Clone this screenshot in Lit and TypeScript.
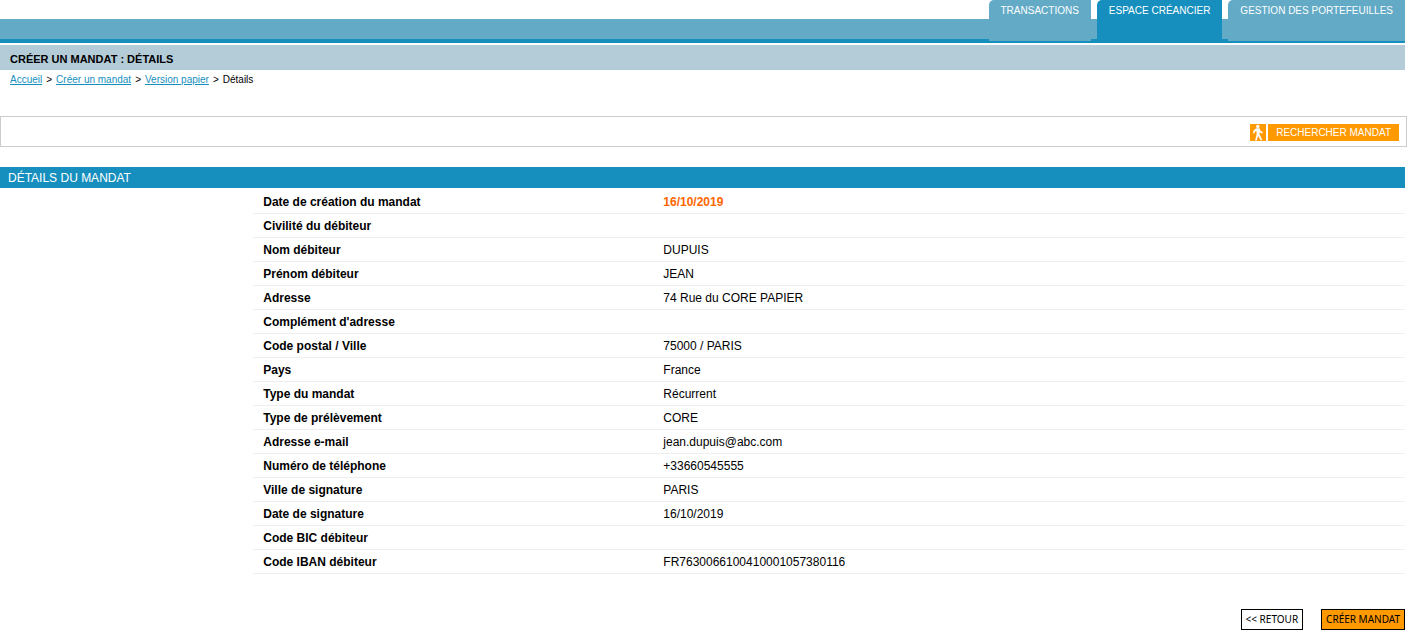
import { LitElement, html, css, nothing } from "lit";
import { customElement } from "lit/decorators.js";
import { classMap } from "lit/directives/class-map.js";

interface Row {
  label: string;
  value: string;
  highlight?: boolean;
}

const TABS = ["TRANSACTIONS", "ESPACE CRÉANCIER", "GESTION DES PORTEFEUILLES"];
const ACTIVE_TAB = 1;

const CRUMBS = ["Accueil", "Créer un mandat", "Version papier"];

const ROWS: Row[] = [
  { label: "Date de création du mandat", value: "16/10/2019", highlight: true },
  { label: "Civilité du débiteur", value: "" },
  { label: "Nom débiteur", value: "DUPUIS" },
  { label: "Prénom débiteur", value: "JEAN" },
  { label: "Adresse", value: "74 Rue du CORE PAPIER" },
  { label: "Complément d'adresse", value: "" },
  { label: "Code postal / Ville", value: "75000 / PARIS" },
  { label: "Pays", value: "France" },
  { label: "Type du mandat", value: "Récurrent" },
  { label: "Type de prélèvement", value: "CORE" },
  { label: "Adresse e-mail", value: "jean.dupuis@abc.com" },
  { label: "Numéro de téléphone", value: "+33660545555" },
  { label: "Ville de signature", value: "PARIS" },
  { label: "Date de signature", value: "16/10/2019" },
  { label: "Code BIC débiteur", value: "" },
  { label: "Code IBAN débiteur", value: "FR7630066100410001057380116" },
];

@customElement("app-root")
export class AppRoot extends LitElement {
  static styles = css`
    :host {
      display: block;
      box-sizing: border-box;
      background: #fff;
      color: #000;
      font: 12px/14px "Liberation Sans", Arial, sans-serif;
    }
    .tabs {
      display: flex;
      justify-content: flex-end;
      gap: 6px;
      height: 43px;
      margin-right: 2px;
      background:
        linear-gradient(#168fbe, #168fbe) 0 100% / 100% 4px no-repeat,
        linear-gradient(#62aac6, #62aac6) 0 19px / 100% 20px no-repeat;
    }
    .tab {
      box-sizing: border-box;
      height: 41px;
      padding: 4px 12px 0;
      border-radius: 5px 0 0 0;
      background: #62aac6;
      color: #fff;
      font-size: 10px;
      text-decoration: none;
      white-space: nowrap;
    }
    .tab.active {
      background: #168fbe;
    }
    .title {
      margin: 2px 2px 0 0;
      padding: 7px 10px 4px;
      background: #b3ccd8;
      font-size: 11px;
      font-weight: bold;
    }
    .crumbs {
      display: flex;
      gap: 4px;
      padding: 3px 10px;
      font-size: 10px;
    }
    .crumbs a {
      color: #168fbe;
    }
    .toolbar {
      display: flex;
      justify-content: flex-end;
      margin-top: 26px;
      padding: 7px 7px 5px;
      border: 1px solid #ccc;
    }
    .search {
      display: flex;
      gap: 2px;
      padding: 0;
      border: 0;
      background: none;
      color: #fff;
      font: 10px/17px "Liberation Sans", Arial, sans-serif;
      cursor: pointer;
    }
    .search-icon {
      display: block;
      width: 16px;
      height: 17px;
      background: #f90;
    }
    .search-label {
      padding: 0 8px;
      background: #f90;
    }
    .section {
      margin: 20px 2px 0 0;
      padding: 4px 8px 3px;
      background: #168fbe;
      color: #fff;
      font-size: 12px;
      font-weight: normal;
    }
    .details {
      width: calc(82% - 2px);
      margin: 2px 2px 0 18%;
      border-collapse: collapse;
      table-layout: fixed;
    }
    .details th,
    .details td {
      height: 14px;
      padding: 5px 10px 4px;
      border-bottom: 1px solid #eee;
      text-align: left;
    }
    .details th {
      width: 33%;
    }
    .details .highlight {
      color: #ff6600;
      font-weight: bold;
    }
    .actions {
      display: flex;
      justify-content: flex-end;
      gap: 18px;
      margin: 35px 2px 0 0;
    }
    .action {
      padding: 2px 4px;
      border: 1px solid #000;
      background: #fff;
      color: #000;
      font: 10px/15px "Noto Sans", Tahoma, sans-serif;
      cursor: pointer;
    }
    .action.primary {
      background: #f90;
    }
  `;

  render() {
    return html`
      <nav class="tabs">
        ${TABS.map(
          (tab, i) => html`<a
            href="#"
            class=${classMap({ tab: true, active: i === ACTIVE_TAB })}
            aria-current=${i === ACTIVE_TAB ? "page" : nothing}
            >${tab}</a
          >`
        )}
      </nav>
      <h1 class="title">CRÉER UN MANDAT : DÉTAILS</h1>
      <nav class="crumbs">
        ${CRUMBS.map((crumb) => html`<a href="#">${crumb}</a><span>&gt;</span>`)}<span>Détails</span>
      </nav>
      <div class="toolbar">
        <button class="search" type="button">
          <svg class="search-icon" viewBox="0 0 16 17" aria-hidden="true">
            <circle cx="7.8" cy="2.4" r="1.7" fill="#fff" />
            <path
              d="M6 4.2H9.6L10.3 6.6L13 8.4L12.3 9.6L9.6 8.2V10.2L12.4 16.2H10.6L8.1 11.8L6.8 16.4H5L6.6 10.6L6.5 7L5 7.6L4.4 9.6L3 9.2L3.6 6.4Z"
              fill="#fff"
            />
          </svg>
          <span class="search-label">RECHERCHER MANDAT</span>
        </button>
      </div>
      <h2 class="section">DÉTAILS DU MANDAT</h2>
      <table class="details">
        <tbody>
          ${ROWS.map(
            (row) => html`<tr>
              <th scope="row">${row.label}</th>
              <td class=${classMap({ highlight: !!row.highlight })}>${row.value}</td>
            </tr>`
          )}
        </tbody>
      </table>
      <div class="actions">
        <button class="action" type="button">&lt;&lt; RETOUR</button>
        <button class="action primary" type="button">CRÉER MANDAT</button>
      </div>
    `;
  }
}
